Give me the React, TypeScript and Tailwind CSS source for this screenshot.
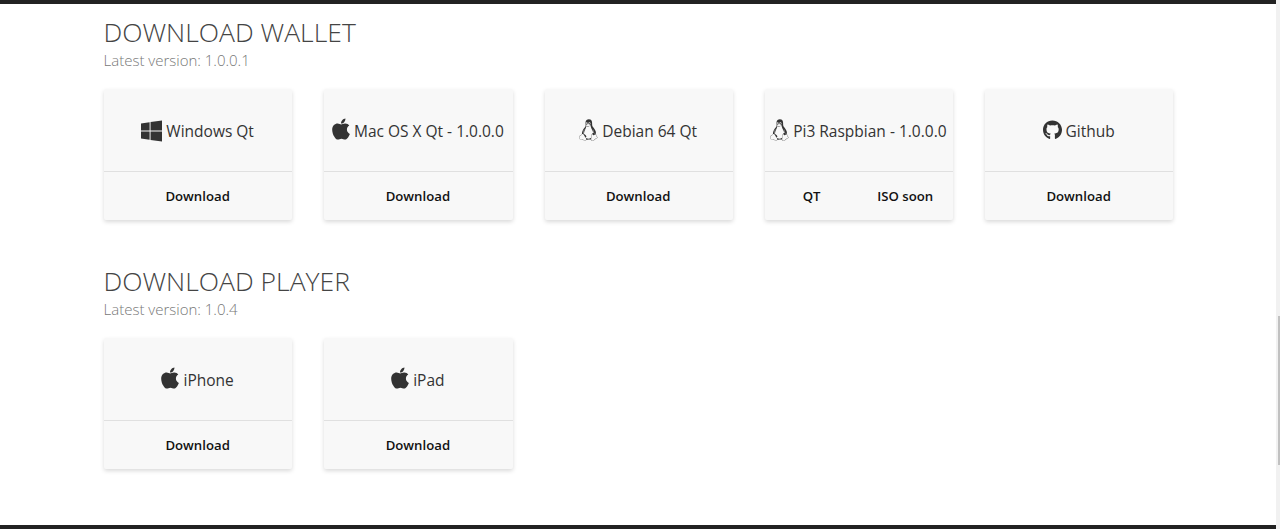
import React from "react";
import { FaWindows, FaApple, FaLinux, FaGithub } from "react-icons/fa";

type CardProps = { icon: React.ReactNode; label: string; actions: string[] };

function Card({ icon, label, actions }: CardProps) {
  return (
    <div className="w-[188.25px] h-[131px] flex flex-col bg-[#f8f8f8] rounded-[2px] shadow-[0_2px_4px_rgba(0,0,0,0.15)]">
      <div className="h-[83px] pt-[4px] pr-[1px] flex items-center justify-center gap-[4px] text-[15.5px] font-normal text-[#333] border-b border-[#e0e0e0] whitespace-nowrap">
        {icon}
        <span>{label}</span>
      </div>
      <div className="flex-1 pt-[1px] pr-[1px] flex items-center text-[13.2px] font-semibold text-[#111]">
        {actions.map((a) => (
          <span key={a} className="flex-1 text-center">{a}</span>
        ))}
      </div>
    </div>
  );
}

const win = <FaWindows className="w-[21px] h-[24px] text-[#333] -mt-[3px]" />;
const apple = <FaApple className="w-[18px] h-[24px] text-[#333] -mt-[7px]" />;
const linux = <FaLinux className="w-[19px] h-[22px] text-[#333] -mt-[4px]" />;
const git = <FaGithub className="w-[19px] h-[20px] text-[#333] -mt-[4px]" />;

export default function App() {
  return (
    <div className="flex h-[529px] overflow-hidden bg-white font-['Open_Sans',sans-serif]">
      <div className="flex-1 flex flex-col">
        <div className="h-[4px] bg-[#222]" />
        <div className="flex-1 pl-[104px]">
          <h2 className="mt-[12px] -ml-[0.5px] text-[26.5px] leading-[32px] font-light text-[#444]">DOWNLOAD WALLET</h2>
          <p className="-ml-[0.5px] text-[15px] leading-[24px] font-light text-[#777]">Latest version: 1.0.0.1</p>
          <div className="mt-[17px] flex gap-[32px]">
            <Card icon={win} label="Windows Qt" actions={["Download"]} />
            <Card icon={apple} label="Mac OS X Qt - 1.0.0.0" actions={["Download"]} />
            <Card icon={linux} label="Debian 64 Qt" actions={["Download"]} />
            <Card icon={linux} label="Pi3 Raspbian - 1.0.0.0" actions={["QT", "ISO soon"]} />
            <Card icon={git} label="Github" actions={["Download"]} />
          </div>
          <h2 className="mt-[45px] -ml-[0.5px] text-[26.5px] leading-[32px] font-light text-[#444]">DOWNLOAD PLAYER</h2>
          <p className="-ml-[0.5px] text-[15px] leading-[24px] font-light text-[#777]">Latest version: 1.0.4</p>
          <div className="mt-[17px] flex gap-[32px]">
            <Card icon={apple} label="iPhone" actions={["Download"]} />
            <Card icon={apple} label="iPad" actions={["Download"]} />
          </div>
        </div>
        <div className="h-[4px] bg-[#222]" />
      </div>
      <div className="w-[4px] bg-[#f1f1f1] flex justify-end">
        <div className="w-[2px] h-[149px] mt-[316px] bg-[#c1c1c1]" />
      </div>
    </div>
  );
}
